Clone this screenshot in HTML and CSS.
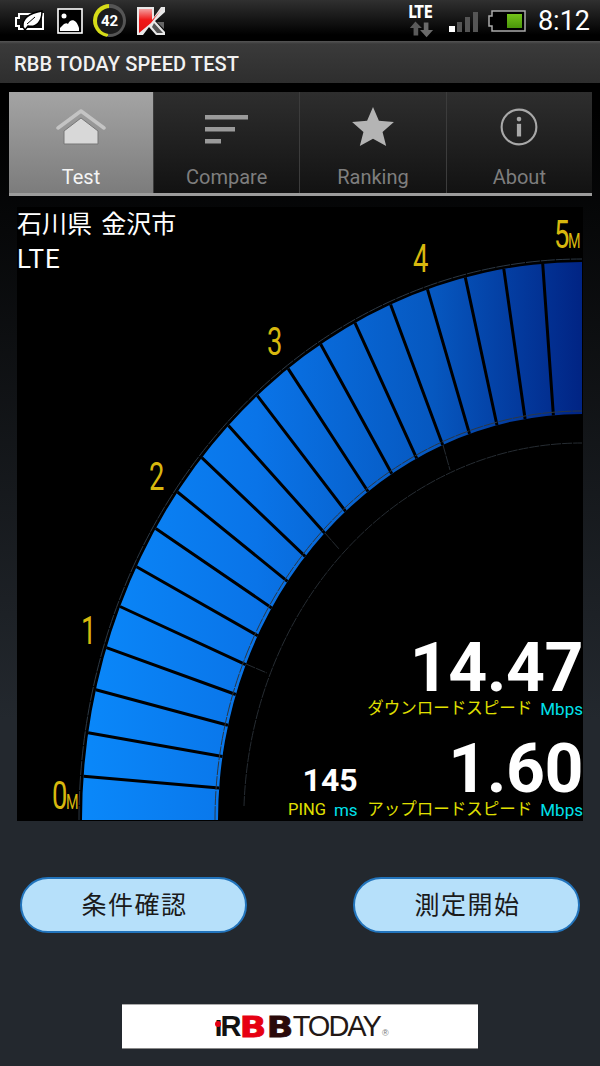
FILE: index.html
```html
<!DOCTYPE html>
<html>
<head>
    <meta charset="utf-8">
    <title>RBB TODAY SPEED TEST</title>
    <link rel="stylesheet" href="styles.css">
</head>
<body>
<div class="status-bar">
    <div class="status-left">
        <svg class="icon-leaf" viewBox="0 0 32 24">
            <path d="M5 5h24v15H5v-3H2V9h3z" fill="none" stroke="#fff" stroke-width="2"/>
            <path d="M9 18C8 9 16 4 28 2c0 10-5 17-14 15l-3 4z" fill="#fff" stroke="#000" stroke-width="1.500"/>
            <path d="M13 15l8-7" stroke="#000" stroke-width="1"/>
        </svg>
        <svg class="icon-pic" viewBox="0 0 26 26">
            <rect x="1" y="1" width="24" height="24" fill="#000" stroke="#fff" stroke-width="1.600"/>
            <circle cx="7" cy="8" r="2.500" fill="#fff"/>
            <path d="M3 20l4-4c2-1 3-1 4 0 2-5 8-6 11 4v3H3z" fill="#fff"/>
        </svg>
        <div class="badge-ring"><span class="badge-num">42</span></div>
        <svg class="icon-k" viewBox="0 0 30 30">
            <defs>
                <linearGradient id="kred" x1="0" y1="0" x2="0" y2="1">
                    <stop offset="0" stop-color="#f4a0a0"/>
                    <stop offset="0.45" stop-color="#f01818"/>
                    <stop offset="1" stop-color="#e01010"/>
                </linearGradient>
            </defs>
            <path d="M1 1h17v10L25 1h4v5L19 15l10 11v3h-9l-7-8-6 8H1z" fill="#e8e8e8"/>
            <path d="M3 3h13v11L26 3 15 17 3 27z" fill="url(#kred)"/>
            <path d="M18 17l9 10h-6l-5-6z" fill="#555"/>
            <path d="M21 16h7v7z" fill="#666"/>
        </svg>
    </div>
    <div class="status-right">
        <div class="net">
            <span class="net-lte">LTE</span>
            <svg class="net-arrows" viewBox="0 0 28 18">
                <path d="M8 1l7 7h-4v8H6V8H2z" fill="#5a5a5a"/>
                <path d="M17 2h5v8h5l-7 8-7-8h4z" fill="#6a6a6a"/>
            </svg>
        </div>
        <svg class="signal" viewBox="0 0 30 22">
            <rect x="0" y="15" width="6" height="6" fill="#fff"/>
            <rect x="8" y="11" width="5" height="10" fill="#555"/>
            <rect x="16" y="6" width="5" height="15" fill="#555"/>
            <rect x="24" y="1" width="5" height="20" fill="#555"/>
        </svg>
        <svg class="battery" viewBox="0 0 38 22">
            <defs>
                <linearGradient id="cell" x1="0" y1="0" x2="0" y2="1">
                    <stop offset="0" stop-color="#74c41a"/>
                    <stop offset="1" stop-color="#4a960a"/>
                </linearGradient>
            </defs>
            <path d="M4 1h33v20H4v-5H1V6h3z" fill="#000" stroke="#aaa" stroke-width="1.500"/>
            <rect x="19" y="4" width="15" height="14" fill="url(#cell)"/>
        </svg>
        <span class="clock">8:12</span>
    </div>
</div>

<div class="action-bar">RBB TODAY SPEED TEST</div>

<div class="tabs-wrap">
    <div class="tabs">
        <div class="tab tab-active">
            <svg class="tab-icon" viewBox="0 0 50 38">
                <path d="M2 20L25 3l23 17" fill="none" stroke="#c4c4c4" stroke-width="3.500" stroke-linejoin="round" stroke-linecap="round"/>
                <path d="M8 23L25 10l17 13v13H8z" fill="#d8d8d8" stroke="#777" stroke-width="1"/>
            </svg>
            <span class="tab-label">Test</span>
        </div>
        <div class="tab">
            <svg class="tab-icon" viewBox="0 0 50 38">
                <rect x="3" y="7" width="43" height="4.500" fill="#9a9a9a"/>
                <rect x="3" y="19" width="30" height="4.500" fill="#9a9a9a"/>
                <rect x="3" y="31" width="16" height="4.500" fill="#9a9a9a"/>
            </svg>
            <span class="tab-label">Compare</span>
        </div>
        <div class="tab">
            <svg class="tab-icon" viewBox="0 0 50 44">
                <path d="M25 0l6.500 15 16.500 1.500L35.500 27.500 39.500 43 25 35 10.500 43l4-15.500L2 16.500 18.500 15z" fill="#b4b4b4"/>
            </svg>
            <span class="tab-label">Ranking</span>
        </div>
        <div class="tab">
            <svg class="tab-icon" viewBox="0 0 38 38">
                <circle cx="19" cy="19" r="16.500" fill="none" stroke="#a8a8a8" stroke-width="2"/>
                <rect x="17" y="16" width="4" height="12" fill="#a8a8a8"/>
                <circle cx="19" cy="11.500" r="2.200" fill="#a8a8a8"/>
            </svg>
            <span class="tab-label">About</span>
        </div>
    </div>
</div>

<div class="gauge">
    <svg class="gauge-art" viewBox="17 207 566 614">
        <defs>
            <linearGradient id="band" gradientUnits="userSpaceOnUse" x1="82" y1="0" x2="582" y2="0">
                <stop offset="0" stop-color="#0a88fa"/>
                <stop offset="0.35" stop-color="#0a74e8"/>
                <stop offset="0.7" stop-color="#0658c0"/>
                <stop offset="1" stop-color="#012484"/>
            </linearGradient>
        </defs>
        <path d="M82 820A500 558 0 0 1 582 262V414A364 406 0 0 0 218 820Z" fill="url(#band)"/>
        <g class="ticks">
            <path d="M83.600 776.200L219.100 788.100M88.100 732.700L222.500 756.500M95.800 689.800L228 725.200M106.400 647.600L235.800 694.500M120 606.500L245.700 664.600"/>
            <path d="M136.500 566.700L257.700 635.700M155.700 528.400L271.700 607.900M177.500 492L287.500 581.400M201.800 457.600L305.200 556.300M228.400 425.400L324.600 532.900"/>
            <path d="M257.300 395.700L345.600 511.300M288.100 368.600L368 491.500M320.700 344.200L391.800 473.800M355 322.800L416.700 458.300M390.600 304.500L442.700 444.900"/>
            <path d="M427.500 289.300L469.500 433.900M465.300 277.400L497 425.200M503.800 268.900L525.100 419M542.700 263.700L553.400 415.300"/>
        </g>
        <g class="rims">
            <path d="M79 820A503 561 0 0 1 582 259"/>
            <path d="M215 820A367 409 0 0 1 582 411"/>
        </g>
        <g class="rim-inner">
            <path d="M244 806A338 377 0 0 1 582 443"/>
            <path d="M246 664L267 673M325 533L339 549M443 445L450 470"/>
        </g>
        <g class="scale">
            <text transform="translate(52 809) scale(.72 1)" class="scale-big">0</text>
            <text transform="translate(66 809) scale(.72 1)" class="scale-small">M</text>
            <text transform="translate(81 644) scale(.72 1)" class="scale-big">1</text>
            <text transform="translate(149 490) scale(.72 1)" class="scale-big">2</text>
            <text transform="translate(267 355) scale(.72 1)" class="scale-big">3</text>
            <text transform="translate(413 272) scale(.72 1)" class="scale-big">4</text>
            <text transform="translate(554 248) scale(.72 1)" class="scale-big">5</text>
            <text transform="translate(568 248) scale(.72 1)" class="scale-small">M</text>
        </g>
    </svg>
    <div class="place">
        <div class="place-name">石川県 金沢市</div>
        <div class="place-net">LTE</div>
    </div>
    <div class="readout">
        <div class="big-num">14.47</div>
        <div class="caption"><span class="cap-ja">ダウンロードスピード</span><span class="cap-unit">Mbps</span></div>
        <div class="up-row">
            <div class="ping">
                <div class="ping-num">145</div>
                <div class="caption"><span class="cap-en">PING</span><span class="cap-unit">ms</span></div>
            </div>
            <div class="up">
                <div class="big-num">1.60</div>
                <div class="caption"><span class="cap-ja">アップロードスピード</span><span class="cap-unit">Mbps</span></div>
            </div>
        </div>
    </div>
</div>

<div class="buttons">
    <div class="pill">条件確認</div>
    <div class="pill">測定開始</div>
</div>

<div class="banner">
    <span class="logo-i">ı</span><span class="logo-r">R</span><span class="logo-b logo-b1">B</span><span class="logo-b logo-b2">B</span><span class="logo-today">TODAY</span><span class="logo-reg">®</span>
</div>
</body>
</html>
```

FILE: styles.css
```css
* {
    margin: 0;
    padding: 0;
    box-sizing: border-box;
}

body {
    width: 600px;
    height: 1066px;
    overflow: hidden;
    background: linear-gradient(#000 110px, #23282e 720px);
    font-family: Roboto, "Noto Sans CJK JP", sans-serif;
}

/* status bar */
.status-bar {
    height: 41px;
    display: flex;
    justify-content: space-between;
    align-items: center;
    padding: 0 10px 0 14px;
    background: linear-gradient(#303030, #000 85%);
}

.status-left {
    display: flex;
    align-items: center;
    gap: 11px;
}

.icon-leaf {
    width: 32px;
    height: 24px;
}

.icon-pic {
    width: 26px;
    height: 26px;
}

.icon-k {
    width: 30px;
    height: 30px;
    margin-left: -1px;
}

.badge-ring {
    width: 33px;
    height: 33px;
    margin-left: -1px;
    border-radius: 50%;
    background: conic-gradient(#555 0 52%, #d6dc18 52% 100%);
    display: flex;
    align-items: center;
    justify-content: center;
}

.badge-num {
    width: 26px;
    height: 26px;
    border-radius: 50%;
    background: #1c1c1c;
    color: #fff;
    font-weight: 700;
    font-size: 15px;
    line-height: 26px;
    text-align: center;
}

.status-right {
    display: flex;
    align-items: center;
}

.net {
    width: 28px;
    display: flex;
    flex-direction: column;
    align-items: center;
    margin-right: 14px;
}

.net-lte {
    color: #fff;
    font-family: "DejaVu Sans", sans-serif;
    font-weight: 700;
    font-size: 18px;
    line-height: 16px;
    transform: scaleX(.75);
}

.net-arrows {
    width: 26px;
    height: 18px;
}

.signal {
    width: 30px;
    height: 22px;
    margin: 2px 9px 0 0;
}

.battery {
    width: 38px;
    height: 22px;
    margin-right: 12px;
}

.clock {
    color: #fff;
    font-size: 27px;
    line-height: 30px;
}

/* title */
.action-bar {
    height: 42px;
    padding-left: 14px;
    line-height: 46px;
    background: linear-gradient(#555 0, #3a3a3a 3px, #2e2e2e 100%);
    color: #f2f2f2;
    font-weight: 500;
    font-size: 20px;
    letter-spacing: .1px;
}

/* tabs */
.tabs-wrap {
    height: 114px;
    padding: 9px 8px 0 9px;
}

.tabs {
    display: flex;
    height: 104px;
    border-bottom: 3px solid #9c9c9c;
    background: #000;
}

.tab {
    flex: 1;
    height: 101px;
    display: flex;
    flex-direction: column;
    align-items: center;
    background: linear-gradient(#2e2e2e, #121212);
    border-left: 1px solid #3c3c3c;
    color: #7e7e7e;
}

.tab-active {
    flex: none;
    width: 144px;
    border-left: 0;
    background: linear-gradient(#a4a4a4, #7c7c7c);
    color: #f4f4f4;
}

.tab-icon {
    height: 40px;
    width: 50px;
    margin-top: 15px;
}

.tab-label {
    margin-top: 18px;
    font-size: 20px;
    line-height: 24px;
}

/* gauge */
.gauge {
    position: relative;
    width: 566px;
    height: 614px;
    margin: 10px 0 0 17px;
    background: #000;
    overflow: hidden;
}

.gauge-art {
    display: block;
    width: 566px;
    height: 614px;
}

.ticks path {
    fill: none;
    stroke: #000;
    stroke-width: 3;
}

.rims path {
    fill: none;
    stroke: #2c3844;
    stroke-width: 1;
    stroke-dasharray: 14 1;
}

.rim-inner path {
    fill: none;
    stroke: #262c32;
    stroke-width: 1;
    stroke-dasharray: 10 1;
}

.scale text {
    fill: #d8b80e;
    font-family: Roboto, sans-serif;
}

.scale-big {
    font-size: 38px;
}

.scale-small {
    font-size: 20px;
}

.place {
    position: absolute;
    top: 1px;
    left: 0;
    color: #fff;
    font-size: 25px;
    line-height: 34px;
}

.place-name {
    word-spacing: 3px;
}

.place-net {
    font-size: 26px;
    letter-spacing: 1px;
}

.readout {
    position: absolute;
    right: 0;
    bottom: 0;
    width: 295px;
    display: flex;
    flex-direction: column;
    align-items: flex-end;
}

.big-num {
    color: #fff;
    font-weight: 700;
    font-size: 68px;
    line-height: 60px;
    letter-spacing: -.5px;
    text-align: right;
}

.caption {
    display: flex;
    justify-content: flex-end;
    gap: 8px;
    font-size: 16.500px;
    line-height: 22px;
    white-space: nowrap;
}

.cap-ja,
.cap-en {
    color: #e0e000;
}

.cap-unit {
    color: #00e0ea;
    font-size: 17px;
}

.up-row {
    width: 100%;
    display: flex;
    justify-content: space-between;
    align-items: flex-end;
    margin-top: 19px;
}

.ping-num {
    margin-bottom: 2px;
    color: #fff;
    font-weight: 700;
    font-size: 32px;
    line-height: 34px;
    text-align: right;
}

.up {
    display: flex;
    flex-direction: column;
    align-items: flex-end;
}

/* buttons */
.buttons {
    display: flex;
    justify-content: space-between;
    padding: 56px 20px 0;
}

.pill {
    width: 227px;
    height: 56px;
    border: 2px solid #2274bc;
    border-radius: 28px;
    background: #b6e0fa;
    color: #1a1a1a;
    font-size: 25px;
    line-height: 54px;
    letter-spacing: 1.500px;
    text-indent: 2px;
    text-align: center;
}

/* banner */
.banner {
    width: 356px;
    height: 45px;
    margin: 71px 0 0 122px;
    display: flex;
    justify-content: center;
    align-items: center;
    background: #fff;
    border-top: 1px solid #aaa;
    border-bottom: 1px solid #888;
    color: #231815;
    font-family: "Liberation Sans", sans-serif;
    font-size: 29px;
    white-space: nowrap;
}

.logo-i,
.logo-r {
    font-weight: 700;
    color: #111;
}

.logo-i {
    position: relative;
    margin-left: 3px;
    margin-right: -2px;
}

.logo-i::before {
    content: "";
    position: absolute;
    top: 11px;
    left: 1px;
    width: 6px;
    height: 6px;
    border-radius: 50%;
    background: #e60012;
}

.logo-r {
    margin-right: -1px;
}

.logo-b {
    display: inline-block;
    margin: 0 2px;
    font-family: "DejaVu Sans", sans-serif;
    font-weight: 700;
    -webkit-text-stroke: .8px currentColor;
    transform: scaleX(1.2);
}

.logo-b1 {
    color: #e60012;
}

.logo-b2 {
    color: #2a0a0a;
}

.logo-today {
    letter-spacing: -2px;
}

.logo-reg {
    margin: 12px 0 0 2px;
    color: #777;
    font-size: 9px;
}
```
